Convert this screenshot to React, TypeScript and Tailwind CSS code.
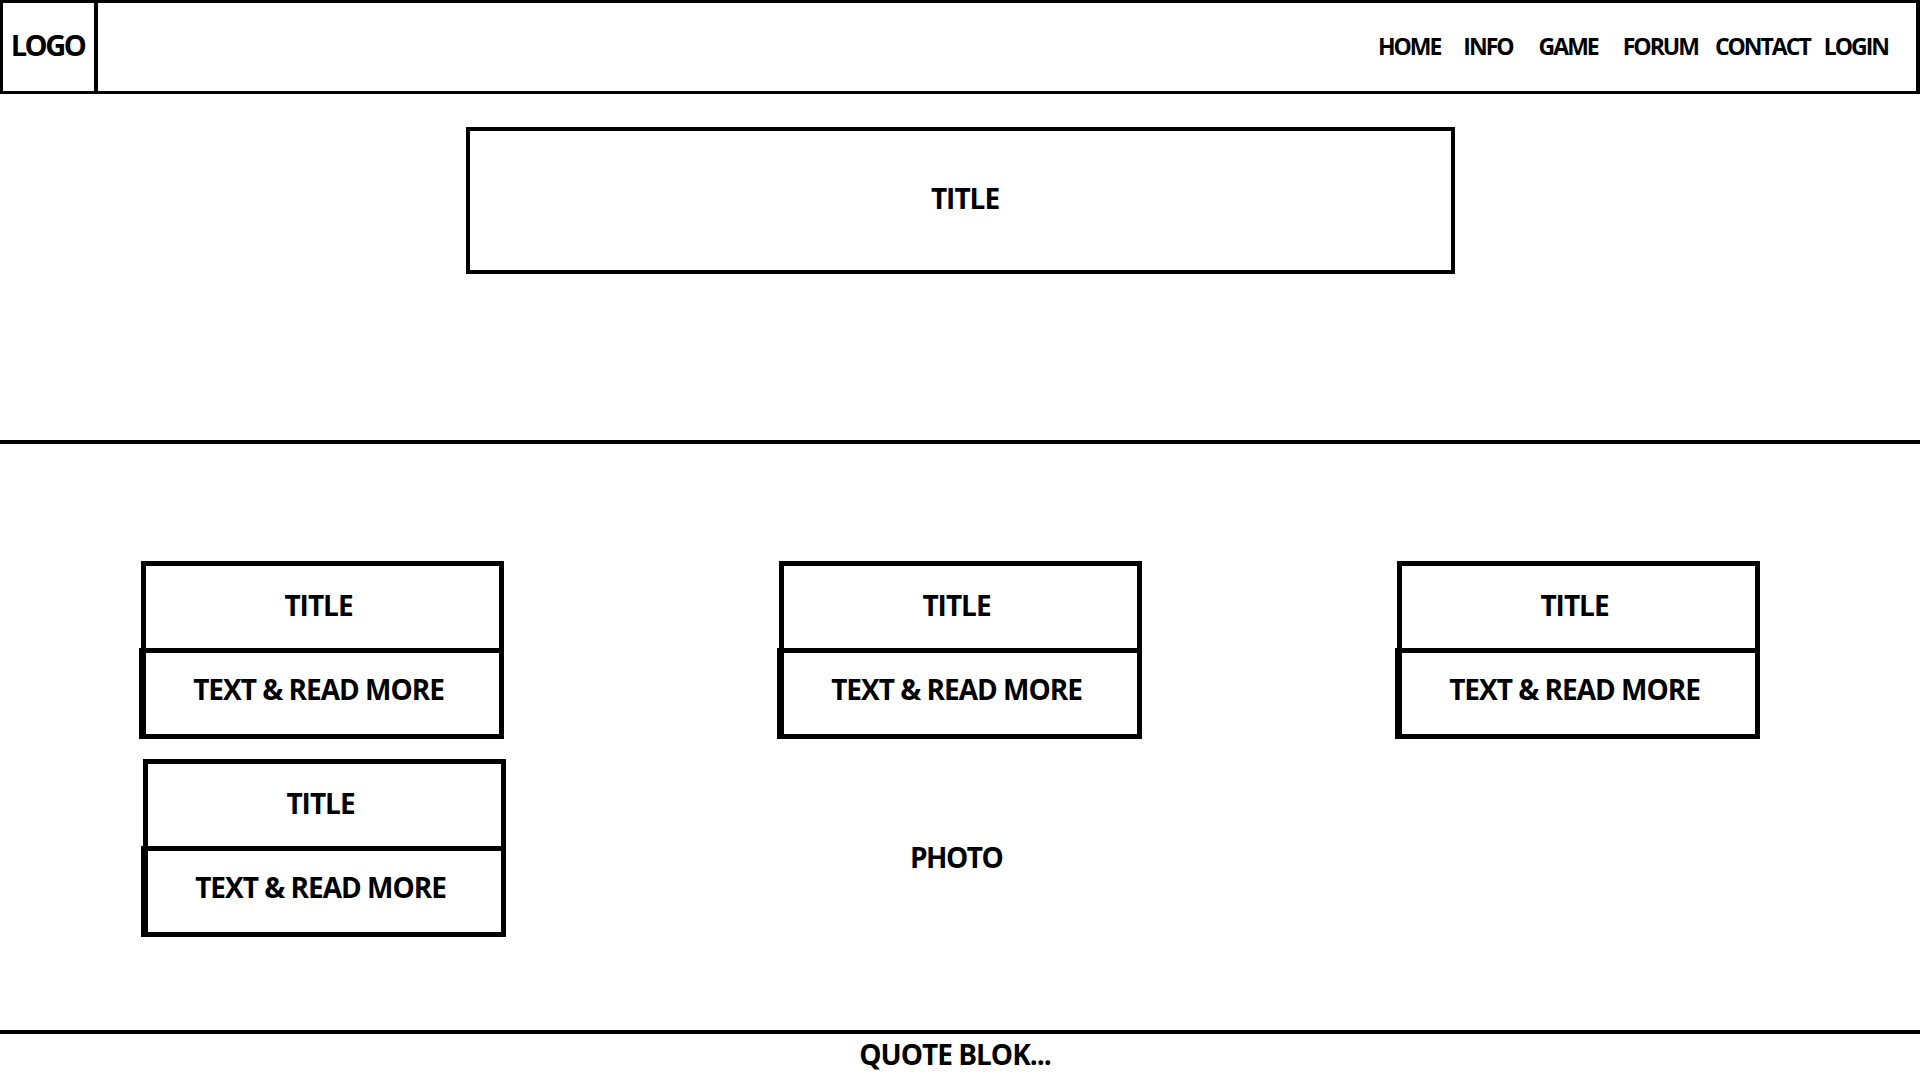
const navItems = [
  { label: "HOME", gap: "" },
  { label: "INFO", gap: "ml-[23px]" },
  { label: "GAME", gap: "ml-[26px]" },
  { label: "FORUM", gap: "ml-[25px]" },
  { label: "CONTACT", gap: "ml-[17px]" },
  { label: "LOGIN", gap: "ml-[14px]" },
];

function Card({ className = "" }: { className?: string }) {
  return (
    <div className={`flex flex-col w-[363px] ${className}`}>
      <div className="h-[92px] border-[5px] border-black flex items-center justify-center pr-[8px] pb-[5px]">
        <span className="text-[28px] leading-none tracking-[-1px]">TITLE</span>
      </div>
      <div className="h-[91px] -mt-[5px] -ml-[2px] border-[5px] border-l-[7px] border-black flex items-center justify-center pr-[8px] pb-[10px]">
        <span className="text-[28px] leading-none tracking-[-1px]">TEXT &amp; READ MORE</span>
      </div>
    </div>
  );
}

export default function App() {
  return (
    <div className="w-[1920px] min-h-[1080px] bg-white text-black font-bold font-['Open_Sans',sans-serif]">
      {/* header */}
      <header className="h-[94px] border-[3px] border-r-4 border-black flex">
        <div className="w-[95px] border-r-[4px] border-black flex items-center justify-center pb-[6px]">
          <span className="text-[29px] leading-none tracking-[-2.5px] pr-[2px]">LOGO</span>
        </div>
        <nav className="flex-1 flex items-center justify-end pr-[28px] pb-[2px]">
          {navItems.map((n) => (
            <a key={n.label} className={`text-[23px] leading-none tracking-[-2px] ${n.gap}`}>
              {n.label}
            </a>
          ))}
        </nav>
      </header>

      {/* hero */}
      <section className="pt-[33px] pb-[166px]">
        <div className="w-[989px] h-[147px] mx-auto border-4 border-black flex items-center justify-center pl-[10px] pb-[6px]">
          <span className="text-[28px] leading-none tracking-[-1px]">TITLE</span>
        </div>
      </section>

      <div className="h-[4px] bg-black" />

      {/* cards */}
      <section className="pt-[117px] pb-[93px]">
        <div className="flex pl-[141px]">
          <Card />
          <Card className="ml-[275px]" />
          <Card className="ml-[255px]" />
        </div>
        <div className="flex pl-[143px] mt-[20px]">
          <Card />
          <span className="ml-[404px] mt-[84px] text-[28px] leading-none tracking-[-1.5px] self-start">PHOTO</span>
        </div>
      </section>

      <div className="h-[4px] bg-black" />

      <footer className="flex justify-center pt-[6px] pr-[10px]">
        <span className="text-[28px] leading-none tracking-[-1px]">QUOTE BLOK...</span>
      </footer>
    </div>
  );
}
